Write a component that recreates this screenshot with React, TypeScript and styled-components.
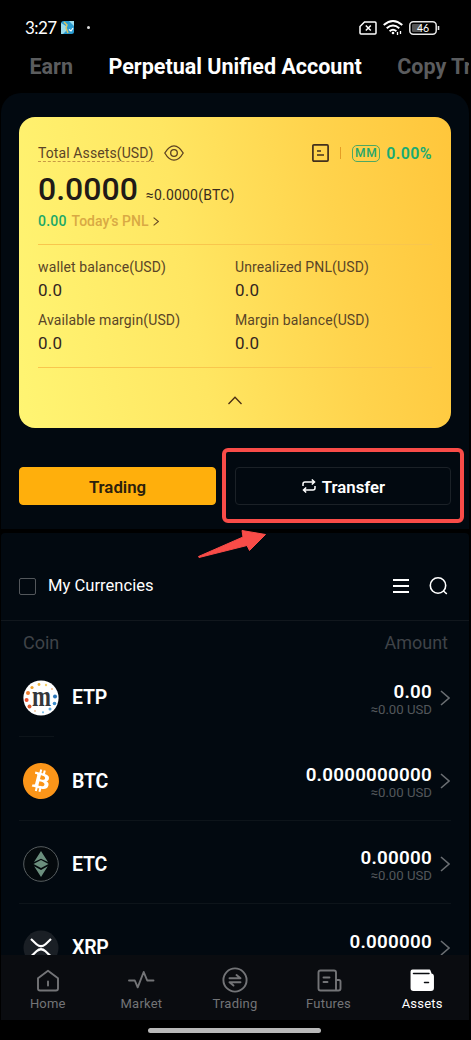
import React from "react";
import styled, { createGlobalStyle } from "styled-components";
import { SiBitcoin } from "react-icons/si";

const GlobalStyle = createGlobalStyle`
  * { box-sizing: border-box; }
  body { margin: 0; background: #000; }
`;

const Screen = styled.div`
  position: relative;
  width: 471px;
  height: 1040px;
  padding: 0 2px 0 1px;
  display: flex;
  flex-direction: column;
  overflow: hidden;
  background: #000;
  color: #fff;
  font-family: Roboto, sans-serif;
  white-space: nowrap;
`;

const StatusBar = styled.header`
  display: flex;
  align-items: center;
  height: 54px;
  padding: 1px 29px 0 24px;
`;
const Clock = styled.span`
  font: 400 17px/20px Lato, sans-serif;
  letter-spacing: -0.6px;
  margin-right: 4.5px;
`;
const Dot = styled.i`
  width: 3px;
  height: 3px;
  border-radius: 50%;
  background: #ddd;
  margin-left: 13px;
`;
const StatusIcons = styled.div`
  display: flex;
  align-items: center;
  gap: 6px;
  margin-left: auto;
`;

const Tabs = styled.nav`
  display: flex;
  align-items: center;
  height: 39px;
  padding: 0 0 13px 28.5px;
  gap: 35.5px;
  overflow: hidden;
`;
const Tab = styled.span<{ $active?: boolean }>`
  flex: none;
  font-size: 21.5px;
  line-height: 26px;
  font-weight: 700;
  color: ${(p) => (p.$active ? "#fff" : "#5b5c5e")};
`;

const AccountPanel = styled.section`
  height: 436px;
  padding: 24px 18px 0;
  border-radius: 20px 20px 0 0;
  background: #020910;
`;
const Card = styled.div`
  width: 432px;
  height: 311px;
  padding: 23px 19px 0;
  border-radius: 16px;
  background: linear-gradient(80deg, #fff573 0%, #ffe662 40%, #ffd34c 72%, #ffc63b 100%);
  color: #33261f;
`;
const CardHeader = styled.div`
  display: flex;
  align-items: center;
  height: 26px;
`;
const TotalLabel = styled.span`
  font-size: 14px;
  line-height: 16px;
  letter-spacing: 0.1px;
  color: #5b4426;
  border-bottom: 1px dashed #c79a45;
  margin-right: 10px;
`;
const Separator = styled.i`
  width: 1px;
  height: 12px;
  background: #e59d25;
  margin: 0 11px;
`;
const MarginBadge = styled.span`
  width: 28px;
  height: 17px;
  border: 1px solid #4fa862;
  border-radius: 5px;
  text-align: center;
  font-size: 12px;
  line-height: 14px;
  font-weight: 500;
  letter-spacing: 0.6px;
  color: #1fa66b;
  margin-right: 6px;
`;
const MarginRate = styled.span`
  font-size: 16px;
  font-weight: 600;
  letter-spacing: 0.4px;
  color: #17ab73;
`;
const Push = styled.div`
  display: flex;
  align-items: center;
  margin-left: auto;
`;
const Balance = styled.div`
  display: flex;
  align-items: baseline;
  height: 44px;
  line-height: 46px;
`;
const BalanceTotal = styled.span`
  font-size: 32px;
  font-weight: 500;
  color: #211a17;
  margin-right: 8px;
`;
const BalanceBtc = styled.span`
  font-size: 14px;
  letter-spacing: 0.2px;
  color: #3a2b1c;
`;
const Pnl = styled.div`
  display: flex;
  align-items: center;
  height: 21px;
  padding-top: 1px;
  font-size: 14px;
  font-weight: 500;
  color: #d9a944;
  gap: 5px;
`;
const PnlValue = styled.span`
  color: #1ba868;
  letter-spacing: 0.2px;
`;
const Figures = styled.div`
  display: grid;
  grid-template-columns: 197px 1fr;
  grid-template-rows: 52.5px 52px;
  height: 124px;
  margin-top: 13px;
  padding-top: 12px;
  border: solid #f9c64d;
  border-width: 1px 0;
`;
const FigureLabel = styled.div`
  font-size: 14px;
  line-height: 20px;
  letter-spacing: 0.13px;
  color: #5a4527;
`;
const FigureValue = styled.div`
  font-size: 17px;
  line-height: 26px;
  letter-spacing: 0.2px;
  color: #33261f;
`;
const Collapse = styled.div`
  display: flex;
  justify-content: center;
  padding-top: 28px;
`;

const Actions = styled.div`
  display: flex;
  gap: 19px;
  margin-top: 39px;
`;
const ActionButton = styled.button<{ $primary?: boolean }>`
  display: flex;
  align-items: center;
  justify-content: center;
  gap: 6px;
  width: ${(p) => (p.$primary ? 197 : 216)}px;
  height: 38px;
  padding: 2px 0 0;
  border: 1px solid ${(p) => (p.$primary ? "#ffaf0c" : "#1b2127")};
  border-radius: 4px;
  background: ${(p) => (p.$primary ? "#ffaf0c" : "transparent")};
  color: ${(p) => (p.$primary ? "#2b200c" : "#fff")};
  font: 600 16.8px/20px Roboto, sans-serif;
  svg { margin: 0 0 3px 1px; }
`;

const CoinsPanel = styled.section`
  flex: 1;
  margin-top: 4px;
  min-height: 0;
  overflow: hidden;
  border-radius: 4px 4px 0 0;
  background: #020910;
`;
const Filter = styled.div`
  display: flex;
  align-items: center;
  height: 88px;
  padding: 19px 21px 0 18px;
  border-bottom: 1px solid #11171d;
  font-size: 16.6px;
  line-height: 20px;
`;
const Checkbox = styled.i`
  width: 17px;
  height: 17px;
  border: 1.5px solid #53575b;
  border-radius: 2px;
  margin-right: 12px;
`;
const ListHeader = styled.div`
  display: flex;
  justify-content: space-between;
  height: 35px;
  padding: 11px 21px 0 22px;
  font-size: 18px;
  line-height: 21px;
  color: #3f4348;
`;
const CoinRow = styled.div`
  display: flex;
  align-items: center;
  height: 83.4px;
  padding: 0 19px 0 22px;
`;
const Rule = styled.hr<{ $short?: boolean }>`
  width: ${(p) => (p.$short ? 35 : 432)}px;
  height: 1px;
  margin: -3px 0 2px 18px;
  border: 0;
  background: #0d141a;
`;
const CoinName = styled.span`
  font-size: 19.5px;
  font-weight: 600;
  letter-spacing: -0.2px;
  margin-left: 13px;
`;
const Amounts = styled.div`
  display: flex;
  flex-direction: column;
  align-items: flex-end;
  margin-left: auto;
  margin-right: 8px;
  padding-top: 4px;
`;
const Amount = styled.span`
  font-size: 18.8px;
  line-height: 20px;
  font-weight: 600;
  letter-spacing: 0.25px;
`;
const Approx = styled.span`
  font-size: 13.2px;
  line-height: 16px;
  color: #53575b;
`;
const BtcLogo = styled(SiBitcoin)`
  width: 36px;
  height: 36px;
  color: #fb9519;
  background: radial-gradient(#fff 60%, transparent 61%);
`;

const BottomNav = styled.nav`
  display: grid;
  grid-template-columns: repeat(5, 93.6px);
  height: 65px;
  padding-top: 10px;
  background: #0a0c10;
`;
const NavItem = styled.div<{ $active?: boolean }>`
  display: flex;
  flex-direction: column;
  align-items: center;
  font-size: 13px;
  line-height: 18px;
  letter-spacing: 0.2px;
  color: ${(p) => (p.$active ? "#fff" : "#737477")};
`;
const GestureArea = styled.footer`
  display: flex;
  justify-content: center;
  height: 20px;
  padding: 8px 1px 0 0;
`;
const GestureBar = styled.div`
  width: 173px;
  height: 5px;
  border-radius: 3px;
  background: #b9b9b9;
`;

const Highlight = styled.div`
  position: absolute;
  left: 222px;
  top: 448px;
  width: 242px;
  height: 75px;
  border: 4px solid #f94c48;
  border-radius: 6px;
`;
const Pointer = styled.svg`
  position: absolute;
  left: 190px;
  top: 525px;
`;

const Chevron = ({ w, h, color, stroke = 1.8 }: { w: number; h: number; color: string; stroke?: number }) => (
  <svg width={w} height={h} viewBox="0 0 10 16" fill="none" stroke={color} strokeWidth={stroke} preserveAspectRatio="none">
    <path d="M1 1l8 7-8 7" />
  </svg>
);

const EtpLogo = () => {
  const dots: [number, number, number, string][] = [
    [16, 4.5, 1.4, "#f3b73c"], [23, 5, 1.2, "#f5cf67"], [29, 9, 0.9, "#f5b37a"],
    [9, 7.5, 1.6, "#f0a028"], [5, 13, 2, "#ee7d2c"], [3.6, 20, 2, "#ea4c2c"],
    [6.5, 26.5, 2, "#df5a2b"], [12, 31, 1, "#f2c39a"], [32, 16.5, 2, "#2b76b9"],
    [31.5, 23.5, 1.8, "#3a8ccc"], [27, 29, 1.5, "#5ba7dc"], [20, 32.3, 1.1, "#79bce6"],
  ];
  return (
    <svg width="36" height="36" viewBox="0 0 36 36">
      <circle cx="18" cy="18" r="17.6" fill="#fff" />
      {dots.map(([x, y, r, c]) => (
        <circle key={`${x}-${y}`} cx={x} cy={y} r={r} fill={c} />
      ))}
      <text x="18.5" y="25.5" textAnchor="middle" fontFamily="Liberation Serif, serif" fontWeight="700" fontSize="29" textLength="19" lengthAdjust="spacingAndGlyphs" fill="#35373a">m</text>
    </svg>
  );
};

const EtcLogo = () => (
  <svg width="36" height="36" viewBox="0 0 36 36">
    <circle cx="18" cy="18" r="17.3" fill="#04090c" stroke="#6d7375" strokeWidth="0.8" />
    <g fill="#6b8f7d">
      <path d="M18 5l7 11-7-3.3L11 16z" />
      <path d="M18 14l7.5 4L18 22l-7.5-4z" />
      <path d="M11.2 20.3L18 24l6.8-3.7L18 31z" />
    </g>
  </svg>
);

const XrpLogo = () => (
  <svg width="36" height="36" viewBox="0 0 36 36">
    <circle cx="18" cy="18" r="17.5" fill="#1a1f25" />
    <path d="M8 9l5.5 5.2q4.5 4.1 9 0L28 9M8 26.5l5.5-5.2q4.5-4.1 9 0l5.5 5.2" fill="none" stroke="#fff" strokeWidth="2.2" />
  </svg>
);

const coins = [
  { name: "ETP", amount: "0.00", logo: <EtpLogo />, short: true },
  { name: "BTC", amount: "0.0000000000", logo: <BtcLogo /> },
  { name: "ETC", amount: "0.00000", logo: <EtcLogo /> },
  { name: "XRP", amount: "0.000000", logo: <XrpLogo /> },
];

const figures = ["wallet balance(USD)", "Unrealized PNL(USD)", "Available margin(USD)", "Margin balance(USD)"];

const NavIcon = ({ children }: { children: React.ReactNode }) => (
  <svg width="30" height="30" viewBox="0 0 30 30" fill="none" stroke="currentColor" strokeWidth="1.9" strokeLinejoin="round" strokeLinecap="round">
    {children}
  </svg>
);

const navItems = [
  { label: "Home", icon: <><path d="M5 13.2L15 5.7l10 7.5v10.3a2 2 0 0 1-2 2H7a2 2 0 0 1-2-2z" /><path d="M15 16.5v4" /></> },
  { label: "Market", icon: <path d="M3 15.5h5.8l2.9 6.8 6-15.3 3.5 8.5h6.3" /> },
  { label: "Trading", icon: <><circle cx="15" cy="15" r="11.6" /><path d="M9.5 13.3h11l-4-3.3M20.5 17.3h-11l4 3.3" /></> },
  { label: "Futures", icon: <><path d="M22 25.5H6.5a2 2 0 0 1-2-2v-16a2 2 0 0 1 2-2H20a2 2 0 0 1 2 2zM22 15h3a1.5 1.5 0 0 1 1.5 1.5v7a2 2 0 0 1-2 2h-2.5" /><path d="M9.5 12.5h6M9.5 17h4" /></> },
  {
    label: "Assets", active: true,
    icon: <><path d="M4.5 6.5V23a2 2 0 0 0 2 2H24a2 2 0 0 0 2-2V11.5a2 2 0 0 0-2-2l-1.5-4h-17a1 1 0 0 0-1 1z" fill="currentColor" /><path d="M6.5 8.5H22M17.5 17.5h4" stroke="#0a0c10" strokeWidth="1.5" /></>,
  },
];

export default function App() {
  return (
    <Screen>
      <GlobalStyle />
      <StatusBar>
        <Clock>3:27</Clock>
        <svg width="13" height="13" viewBox="0 0 13 13">
          <rect width="13" height="13" rx="2.5" fill="#2a9bd0" />
          <path d="M0 2l5 3v5l-3 3H0zM8 0h5v5z" fill="#9bdcec" />
          <path d="M3 1l3 3-1 3 2 5" stroke="#d8c565" strokeWidth="1.5" fill="none" />
          <path d="M8 8.5l2 1.5 2-3" stroke="#fff" strokeWidth="1.2" fill="none" />
        </svg>
        <Dot />
        <StatusIcons>
          <svg width="18" height="14" viewBox="0 0 18 14" fill="none" stroke="#fff" strokeWidth="1.5">
            <path d="M5.5 1H16a1 1 0 0 1 1 1v10a1 1 0 0 1-1 1H2a1 1 0 0 1-1-1V5.5z" />
            <path d="M6.8 4.5l5 5M11.8 4.5l-5 5" />
          </svg>
          <svg width="20" height="15" viewBox="0 0 20 15" fill="none" stroke="#fff" strokeWidth="1.9">
            <path d="M.7 5q9.3-8 18.6 0M3.7 8.3q6.3-5.500 12.6 0M6.600 11.300q3.400-3 6.800 0" />
            <circle cx="10" cy="13" r="1.3" fill="#fff" stroke="none" />
            <path d="M14.5 12v3M17.5 11v3" strokeWidth="1.3" />
          </svg>
          <svg width="31" height="14" viewBox="0 0 31 14">
            <rect x=".8" y=".8" width="26.4" height="12.4" rx="3.5" fill="none" stroke="#e8e8e8" strokeWidth="1.5" />
            <rect x="3" y="3" width="9" height="8" rx="1" fill="#555" />
            <path d="M29.5 5v4" stroke="#e8e8e8" strokeWidth="1.6" />
            <text x="14" y="10.8" textAnchor="middle" fontFamily="Lato, sans-serif" fontSize="10.5" fill="#fff">46</text>
          </svg>
        </StatusIcons>
      </StatusBar>
      <Tabs>
        <Tab>Earn</Tab>
        <Tab $active>Perpetual Unified Account</Tab>
        <Tab>Copy Trading</Tab>
      </Tabs>

      <AccountPanel>
        <Card>
          <CardHeader>
            <TotalLabel>Total Assets(USD)</TotalLabel>
            <svg width="20" height="16" viewBox="0 0 20 16" fill="none" stroke="#5b4022" strokeWidth="1.3">
              <path d="M.8 8Q5 .8 10 .8T19.2 8Q15 15.2 10 15.2T.8 8z" />
              <circle cx="10" cy="8" r="3.3" />
            </svg>
            <Push>
              <svg width="17" height="18" viewBox="0 0 17 18" fill="none" stroke="#43301d" strokeWidth="1.7">
                <rect x=".9" y=".9" width="15.2" height="16.2" rx="1" />
                <path d="M5 7h4M5 11h7" />
              </svg>
              <Separator />
              <MarginBadge>MM</MarginBadge>
              <MarginRate>0.00%</MarginRate>
            </Push>
          </CardHeader>
          <Balance>
            <BalanceTotal>0.0000</BalanceTotal>
            <BalanceBtc>≈0.0000(BTC)</BalanceBtc>
          </Balance>
          <Pnl>
            <PnlValue>0.00</PnlValue>
            <span>Today’s PNL</span>
            <Chevron w={6} h={9} color="#6b4c25" />
          </Pnl>
          <Figures>
            {figures.map((label) => (
              <div key={label}>
                <FigureLabel>{label}</FigureLabel>
                <FigureValue>0.0</FigureValue>
              </div>
            ))}
          </Figures>
          <Collapse>
            <svg width="14" height="9" viewBox="0 0 14 9" fill="none" stroke="#4a2d14" strokeWidth="1.3">
              <path d="M.5 8L7 1.2 13.5 8" />
            </svg>
          </Collapse>
        </Card>
        <Actions>
          <ActionButton $primary>Trading</ActionButton>
          <ActionButton>
            <svg width="14" height="14" viewBox="0 0 14 14" fill="none" stroke="#fff" strokeWidth="1.5">
              <path d="M1 7V5a2 2 0 0 1 2-2h9.500M9.800.5l2.700 2.500-2.700 2.500M13 7v2a2 2 0 0 1-2 2H1.500M4.200 8.500L1.500 11l2.700 2.500" />
            </svg>
            Transfer
          </ActionButton>
        </Actions>
      </AccountPanel>

      <CoinsPanel>
        <Filter>
          <Checkbox />
          My Currencies
          <Push>
            <svg width="55" height="20" viewBox="0 0 55 20" fill="none" stroke="#fff">
              <path d="M0 4h16M0 10h16M0 16h16" strokeWidth="1.9" />
              <circle cx="45" cy="9.500" r="7.700" strokeWidth="1.600" />
              <path d="M50.500 15l3.300 3" strokeWidth="1.600" />
            </svg>
          </Push>
        </Filter>
        <ListHeader>
          <span>Coin</span>
          <span>Amount</span>
        </ListHeader>
        {coins.map((coin) => (
          <React.Fragment key={coin.name}>
            <CoinRow>
              {coin.logo}
              <CoinName>{coin.name}</CoinName>
              <Amounts>
                <Amount>{coin.amount}</Amount>
                <Approx>≈0.00 USD</Approx>
              </Amounts>
              <Chevron w={10} h={16} color="#6a6e72" stroke={1.6} />
            </CoinRow>
            <Rule $short={coin.short} />
          </React.Fragment>
        ))}
      </CoinsPanel>

      <BottomNav>
        {navItems.map((item) => (
          <NavItem key={item.label} $active={item.active}>
            <NavIcon>{item.icon}</NavIcon>
            {item.label}
          </NavItem>
        ))}
      </BottomNav>
      <GestureArea>
        <GestureBar />
      </GestureArea>

      <Highlight />
      <Pointer width="80" height="36" viewBox="190 525 80 36" fill="#f94c48" stroke="#f94c48" strokeLinejoin="round">
        <path d="M198.5 556.5l44.5-19.5-1-6.5 23.5 4-16 16-2.5-5-48 12z" />
      </Pointer>
    </Screen>
  );
}
